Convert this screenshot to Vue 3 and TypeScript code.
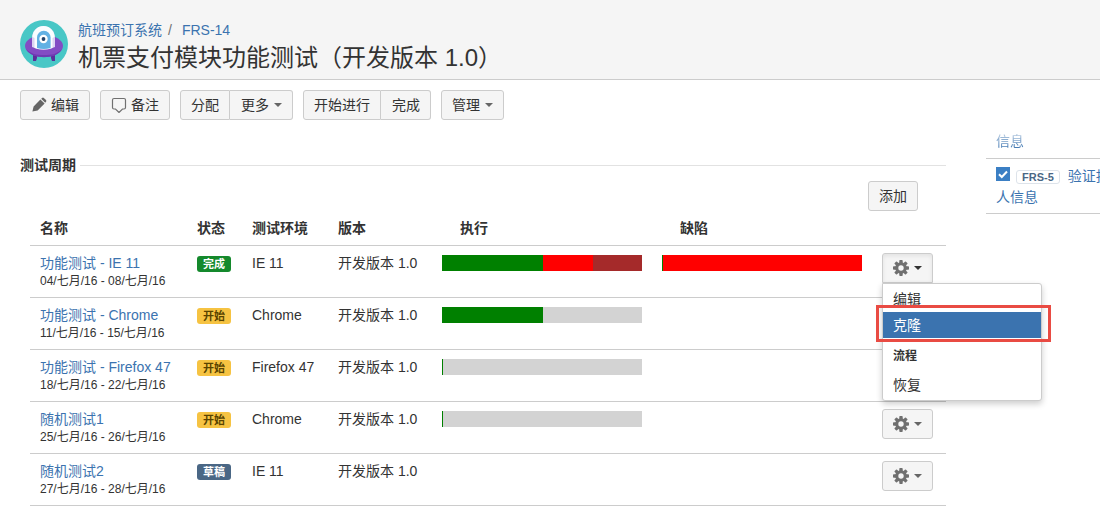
<script setup lang="ts">
type Tone = 'done' | 'active' | 'draft'

interface Segment {
  color: string
  share: number
}

interface Cycle {
  name: string
  dates: string
  status: string
  tone: Tone
  env: string
  version: string
  execution: Segment[]
  defects: Segment[]
  action: 'open' | 'closed'
}

const cycles: Cycle[] = [
  {
    name: '功能测试 - IE 11',
    dates: '04/七月/16 - 08/七月/16',
    status: '完成',
    tone: 'done',
    env: 'IE 11',
    version: '开发版本 1.0',
    execution: [
      { color: '#008000', share: 50.5 },
      { color: '#ff0000', share: 25 },
      { color: '#a52a2a', share: 24.5 },
    ],
    defects: [
      { color: '#008000', share: 0.5 },
      { color: '#ff0000', share: 99.5 },
    ],
    action: 'open',
  },
  {
    name: '功能测试 - Chrome',
    dates: '11/七月/16 - 15/七月/16',
    status: '开始',
    tone: 'active',
    env: 'Chrome',
    version: '开发版本 1.0',
    execution: [
      { color: '#008000', share: 50.5 },
      { color: '#d3d3d3', share: 49.5 },
    ],
    defects: [],
    action: 'closed',
  },
  {
    name: '功能测试 - Firefox 47',
    dates: '18/七月/16 - 22/七月/16',
    status: '开始',
    tone: 'active',
    env: 'Firefox 47',
    version: '开发版本 1.0',
    execution: [
      { color: '#008000', share: 0.5 },
      { color: '#d3d3d3', share: 99.5 },
    ],
    defects: [],
    action: 'closed',
  },
  {
    name: '随机测试1',
    dates: '25/七月/16 - 26/七月/16',
    status: '开始',
    tone: 'active',
    env: 'Chrome',
    version: '开发版本 1.0',
    execution: [
      { color: '#008000', share: 0.5 },
      { color: '#d3d3d3', share: 99.5 },
    ],
    defects: [],
    action: 'closed',
  },
  {
    name: '随机测试2',
    dates: '27/七月/16 - 28/七月/16',
    status: '草稿',
    tone: 'draft',
    env: 'IE 11',
    version: '开发版本 1.0',
    execution: [],
    defects: [],
    action: 'closed',
  },
]
</script>

<template>
  <div class="page">
    <header class="header">
      <svg class="avatar" viewBox="0 0 48 48" aria-hidden="true">
        <circle cx="24" cy="24" r="24" fill="#48c7c6" />
        <path d="M13 34h4v4l-1 3h-3zM31 34h4v7h-3l-1-3z" fill="#5b2d9a" />
        <ellipse cx="24" cy="26" rx="19" ry="11" fill="#834cc4" />
        <path d="M6 29c5 11 31 11 36 0c-5 5-10 6-18 6s-13-1-18-6z" fill="#6f3bb2" />
        <path d="M12 18a11.500 12 0 0 1 23 0v9q-11.500 5-23 0z" fill="#dcd5f2" />
        <path d="M12.500 17a11 11 0 0 1 22 0l-2 1v10q-9 3-18 0V18z" fill="#fafdff" />
        <path d="M17 28V17.500a6.800 6.800 0 0 1 13.600 0V28q-6.800 2-13.600 0z" fill="#62b1e4" />
        <circle cx="23.500" cy="19" r="4.200" fill="#fff" />
        <circle cx="23.500" cy="19" r="1.900" fill="#23436b" />
      </svg>
      <div class="headline">
        <nav class="crumbs">
          <a href="#">航班预订系统</a><span class="slash">/</span><a href="#">FRS-14</a>
        </nav>
        <h1>机票支付模块功能测试（开发版本 1.0）</h1>
      </div>
    </header>

    <div class="toolbar">
      <div class="group">
        <button type="button">
          <svg class="icon" viewBox="0 0 16 16" aria-hidden="true">
            <path d="M1.400 14.600l1.200-5.200L9.400 2.400l4.200 4.200-7 6.900zM10.200 1.700l.9-.8q.9-.7 1.700 0l2.200 2.200q.8.900 0 1.700l-.8.900z" fill="#666" />
          </svg>编辑
        </button>
      </div>
      <div class="group">
        <button type="button">
          <svg class="icon" viewBox="0 0 16 16" aria-hidden="true">
            <path d="M3 1.500h10q1.500 0 1.500 1.500v7.500q0 1.500-1.500 1.500h-1.500l-3.500 3.500-3.500-3.500H3q-1.500 0-1.500-1.500V3q0-1.500 1.500-1.500z" fill="none" stroke="#707070" stroke-width="1.200" />
          </svg>备注
        </button>
      </div>
      <div class="group">
        <button type="button">分配</button>
        <button type="button">更多<span class="caret"></span></button>
      </div>
      <div class="group">
        <button type="button">开始进行</button>
        <button type="button">完成</button>
      </div>
      <div class="group">
        <button type="button">管理<span class="caret"></span></button>
      </div>
    </div>

    <div class="content">
      <main class="main">
        <h2><span>测试周期</span></h2>
        <div class="add"><button type="button">添加</button></div>
        <table>
          <colgroup>
            <col class="c-name" /><col class="c-status" /><col class="c-env" /><col class="c-version" />
            <col class="c-bar" /><col class="c-bar" /><col class="c-action" />
          </colgroup>
          <thead>
            <tr>
              <th>名称</th>
              <th>状态</th>
              <th>测试环境</th>
              <th>版本</th>
              <th class="bar-head">执行</th>
              <th class="bar-head">缺陷</th>
              <th></th>
            </tr>
          </thead>
          <tbody>
            <tr v-for="c in cycles" :key="c.name">
              <td>
                <a href="#">{{ c.name }}</a>
                <div class="dates">{{ c.dates }}</div>
              </td>
              <td><span class="lozenge" :class="c.tone">{{ c.status }}</span></td>
              <td>{{ c.env }}</td>
              <td>{{ c.version }}</td>
              <td>
                <div v-if="c.execution.length" class="bar">
                  <i v-for="s in c.execution" :key="s.color" :style="{ width: s.share + '%', background: s.color }"></i>
                </div>
              </td>
              <td>
                <div v-if="c.defects.length" class="bar">
                  <i v-for="s in c.defects" :key="s.color" :style="{ width: s.share + '%', background: s.color }"></i>
                </div>
              </td>
              <td>
                <div class="action">
                  <button type="button" class="gear" :class="{ open: c.action === 'open' }" aria-label="操作">
                    <svg class="icon" viewBox="0 0 16 16" aria-hidden="true">
                      <g fill="#707070">
                        <rect v-for="a in [0, 45, 90, 135]" :key="a" x="6.300" y="0" width="3.400" height="16" rx=".8" :transform="`rotate(${a} 8 8)`" />
                        <circle cx="8" cy="8" r="5.800" />
                      </g>
                      <circle cx="8" cy="8" r="2.700" fill="#f5f5f5" />
                    </svg>
                    <span class="caret"></span>
                  </button>
                  <div v-if="c.action === 'open'" class="menu">
                    <button type="button">编辑</button>
                    <button type="button" class="selected">克隆</button>
                    <strong>流程</strong>
                    <button type="button">恢复</button>
                    <div class="marker"></div>
                  </div>
                </div>
              </td>
            </tr>
          </tbody>
        </table>
      </main>

      <aside class="side">
        <div class="side-head"><a href="#">信息</a></div>
        <div class="side-item">
          <span class="check">
            <input id="frs-5" type="checkbox" checked aria-label="FRS-5" />
            <svg viewBox="0 0 14 14" aria-hidden="true">
              <path d="M3 7.200l2.800 2.800L11 4.500" fill="none" stroke="#fff" stroke-width="2" />
            </svg>
          </span>
          <a href="#" class="key">FRS-5</a>
          <a href="#">验证投保<br />人信息</a>
        </div>
      </aside>
    </div>
  </div>
</template>

<style>
body {
  margin: 0;
  background: #fff;
}
</style>

<style scoped>
.page {
  overflow: hidden;
  min-height: 100vh;
  color: #333;
  font: 14px/20px "Liberation Sans", Arial, "Noto Sans CJK SC", sans-serif;
}
* {
  box-sizing: border-box;
}
a {
  color: #3b73af;
  text-decoration: none;
}
.header {
  display: flex;
  gap: 10px;
  padding: 20px 20px 3px;
  background: #f5f5f5;
  border-bottom: 1px solid #ccc;
}
.avatar {
  flex: none;
  width: 48px;
  height: 48px;
}
.slash {
  padding: 0 10px 0 6px;
  color: #707070;
}
h1 {
  margin: 0;
  font-size: 24px;
  font-weight: 400;
  line-height: 36px;
  white-space: nowrap;
}
.toolbar {
  display: flex;
  gap: 10px;
  padding: 10px 20px;
}
.group {
  display: flex;
}
button {
  display: inline-flex;
  align-items: center;
  height: 30px;
  margin: 0;
  padding: 0 10px;
  color: #333;
  font: inherit;
  white-space: nowrap;
  background: #f5f5f5;
  border: 1px solid #ccc;
  border-radius: 3px;
}
.group button + button {
  padding-left: 11px;
  border-left: 0;
  border-top-left-radius: 0;
  border-bottom-left-radius: 0;
}
.group button:not(:last-child) {
  border-top-right-radius: 0;
  border-bottom-right-radius: 0;
}
.icon {
  width: 16px;
  height: 16px;
  margin-right: 4px;
}
.caret {
  margin-left: 5px;
  border: 4px solid transparent;
  border-top-color: #666;
  border-bottom: 0;
}
.content {
  display: flex;
  gap: 40px;
}
.main {
  flex: 1;
  min-width: 0;
  padding: 25px 0 0 20px;
}
h2 {
  display: flex;
  align-items: center;
  gap: 4px;
  margin: 0;
  font-size: 14px;
  line-height: 20px;
}
h2::after {
  flex: 1;
  height: 1px;
  background: #e2e2e2;
  content: "";
}
.add {
  display: flex;
  justify-content: flex-end;
  padding: 6px 28px 0 0;
}
table {
  width: calc(100% - 10px);
  margin-left: 10px;
  table-layout: fixed;
  border-collapse: collapse;
}
.c-status {
  width: 55px;
}
.c-env {
  width: 86px;
}
.c-version {
  width: 104px;
}
.c-bar {
  width: 220px;
}
.c-action {
  width: 74px;
}
th,
td {
  padding: 0 10px;
  text-align: left;
  vertical-align: top;
  white-space: nowrap;
  border-bottom: 1px solid #ccc;
}
th {
  height: 34px;
  padding-top: 7px;
}
th.bar-head {
  padding-left: 28px;
}
td {
  height: 52px;
  padding-top: 7px;
}
.dates {
  font-size: 12px;
  line-height: 16px;
}
.lozenge {
  display: block;
  width: 34px;
  height: 16px;
  margin-top: 3px;
  font-size: 11px;
  font-weight: 700;
  line-height: 16px;
  text-align: center;
  border-radius: 3px;
}
.done {
  color: #fff;
  background: #14892c;
}
.active {
  color: #594300;
  background: #f6c342;
}
.draft {
  color: #fff;
  background: #4a6785;
}
.bar {
  display: flex;
  height: 16px;
  margin-top: 2px;
}
.action {
  position: relative;
}
.gear .icon {
  margin-right: 0;
}
.gear.open {
  border-bottom-right-radius: 0;
  border-bottom-left-radius: 0;
  box-shadow: inset 0 2px 4px rgba(0, 0, 0, 0.08);
}
.gear.open .caret {
  border-top-color: #333;
}
.menu {
  position: absolute;
  top: 30px;
  left: 0;
  z-index: 2;
  width: 160px;
  padding: 2px 0;
  background: #fff;
  border: 1px solid #ccc;
  border-radius: 0 3px 3px 3px;
  box-shadow: 0 3px 6px rgba(0, 0, 0, 0.2);
}
.menu button {
  display: block;
  width: 100%;
  height: 26px;
  text-align: left;
  background: none;
  border: 0;
  border-radius: 0;
}
.menu button.selected {
  color: #fff;
  background: #3b73af;
}
.menu strong {
  display: block;
  padding: 8px 10px 6px;
  font-size: 12px;
}
.marker {
  position: absolute;
  top: 21px;
  right: -10px;
  left: -7px;
  height: 37px;
  border: 3px solid #e94b43;
  pointer-events: none;
}
.side {
  width: 114px;
  padding-top: 1px;
  white-space: nowrap;
}
.side-head {
  padding: 0 10px 7px;
  border-bottom: 1px solid #ccc;
}
.side-head a {
  mask-image: linear-gradient(rgba(0, 0, 0, 0.3), #000);
}
.side-item {
  padding: 7px 10px 6px;
  border-bottom: 1px solid #ccc;
}
.check {
  display: inline-grid;
  width: 14px;
  height: 14px;
  vertical-align: 0;
}
.check > * {
  grid-area: 1 / 1;
  width: 14px;
  height: 14px;
}
.check input {
  margin: 0;
  appearance: none;
  background: #3b7fc4;
}
.check svg {
  pointer-events: none;
}
.key {
  margin: 0 8px 0 6px;
  padding: 0 5px;
  color: #4a6785;
  font-size: 11px;
  font-weight: 700;
  border: 1px solid #dde3ea;
  border-radius: 3px;
}
</style>
